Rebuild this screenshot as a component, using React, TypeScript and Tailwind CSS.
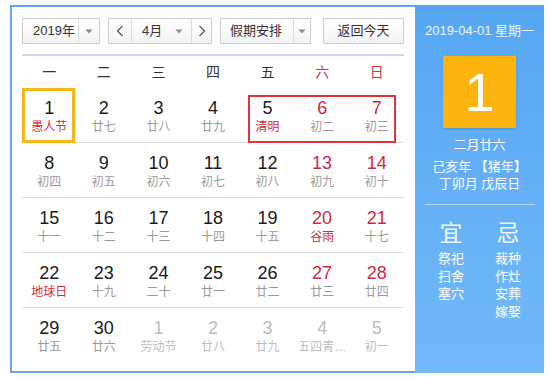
import React from "react";

type Cell = { d: number; l: string; kind?: "fest" | "other" };

const rows: Cell[][] = [
  [
    { d: 1, l: "愚人节", kind: "fest" },
    { d: 2, l: "廿七" },
    { d: 3, l: "廿八" },
    { d: 4, l: "廿九" },
    { d: 5, l: "清明", kind: "fest" },
    { d: 6, l: "初二" },
    { d: 7, l: "初三" },
  ],
  [
    { d: 8, l: "初四" },
    { d: 9, l: "初五" },
    { d: 10, l: "初六" },
    { d: 11, l: "初七" },
    { d: 12, l: "初八" },
    { d: 13, l: "初九" },
    { d: 14, l: "初十" },
  ],
  [
    { d: 15, l: "十一" },
    { d: 16, l: "十二" },
    { d: 17, l: "十三" },
    { d: 18, l: "十四" },
    { d: 19, l: "十五" },
    { d: 20, l: "谷雨", kind: "fest" },
    { d: 21, l: "十七" },
  ],
  [
    { d: 22, l: "地球日", kind: "fest" },
    { d: 23, l: "十九" },
    { d: 24, l: "二十" },
    { d: 25, l: "廿一" },
    { d: 26, l: "廿二" },
    { d: 27, l: "廿三" },
    { d: 28, l: "廿四" },
  ],
  [
    { d: 29, l: "廿五" },
    { d: 30, l: "廿六" },
    { d: 1, l: "劳动节", kind: "other" },
    { d: 2, l: "廿八", kind: "other" },
    { d: 3, l: "廿九", kind: "other" },
    { d: 4, l: "五四青…", kind: "other" },
    { d: 5, l: "初一", kind: "other" },
  ],
];

const weekdays = ["一", "二", "三", "四", "五", "六", "日"];

function Tri() {
  return (
    <svg width="8" height="5" viewBox="0 0 8 5">
      <path d="M0.5 0.5 L7.5 0.5 L4 4.5 Z" fill="#8a8a8a" />
    </svg>
  );
}

function Chev({ right }: { right?: boolean }) {
  return (
    <svg width="8" height="12" viewBox="0 0 8 12">
      <path
        d={right ? "M1.5 1 L6.5 6 L1.5 11" : "M6.5 1 L1.5 6 L6.5 11"}
        fill="none"
        stroke="#555"
        strokeWidth="1.2"
      />
    </svg>
  );
}

export default function App() {
  return (
    <div className="w-[550px] h-[378px] bg-white pt-[5px] pl-[10px] font-['Liberation_Sans','Noto_Sans_CJK_SC',sans-serif]">
      <div className="flex h-[368px] w-[534px]">
        {/* Left calendar */}
        <div className="w-[405px] h-[368px] border-2 border-r-0 border-[#5ea9ef] pl-[10px] pr-[11px] pt-[11px]">
          {/* controls */}
          <div className="flex h-[26px] text-[13px] text-[#333]">
            <div className="flex w-[78px] border border-[#cdcdcd] bg-gradient-to-b from-white to-[#f3f3f3]">
              <div className="flex w-[55px] items-center pl-[10px]">2019年</div>
              <div className="flex flex-1 items-center justify-center border-l border-[#dcdcdc]">
                <Tri />
              </div>
            </div>
            <div className="ml-[8px] flex w-[104px] border border-[#cdcdcd] bg-gradient-to-b from-white to-[#f3f3f3]">
              <div className="flex w-[23px] items-center justify-center border-r border-[#dcdcdc]">
                <Chev />
              </div>
              <div className="flex w-[59px] items-center justify-between pl-[10px] pr-[8px]">
                <span>4月</span>
                <Tri />
              </div>
              <div className="flex flex-1 items-center justify-center border-l border-[#dcdcdc]">
                <Chev right />
              </div>
            </div>
            <div className="ml-[8px] flex w-[91px] border border-[#cdcdcd] bg-gradient-to-b from-white to-[#f3f3f3]">
              <div className="flex w-[72px] items-center pl-[9px]">假期安排</div>
              <div className="flex flex-1 items-center justify-center border-l border-[#dcdcdc]">
                <Tri />
              </div>
            </div>
            <div className="ml-[12px] flex w-[81px] items-center justify-center border border-[#cdcdcd] bg-gradient-to-b from-white to-[#f3f3f3]">
              返回今天
            </div>
          </div>
          {/* divider */}
          <div className="mt-[10px] h-[2px] bg-[#c9d7e6]" />
          {/* weekday header */}
          <div className="grid h-[32px] grid-cols-7 items-center text-[14px]">
            {weekdays.map((w, i) => (
              <div
                key={w}
                className={`text-center ${i >= 5 ? "text-[#d8343f]" : "text-[#333]"}`}
              >
                {w}
              </div>
            ))}
          </div>
          {/* days */}
          {rows.map((row, ri) => (
            <div
              key={ri}
              className={`relative grid h-[55px] grid-cols-7 ${ri < 4 ? "border-b border-[#dedede]" : ""}`}
            >
              {ri === 0 && (
                <div className="pointer-events-none absolute left-[226px] top-[7px] h-[48px] w-[148px] border-2 border-[#e2343d]" />
              )}
              {row.map((c, ci) => {
                const other = c.kind === "other";
                const weekend = ci >= 5;
                const numColor = other
                  ? "text-[#bdbdbd]"
                  : weekend
                  ? "text-[#d4283f]"
                  : "text-[#1a1a1a]";
                const lunColor = other
                  ? "text-[#bdbdbd]"
                  : c.kind === "fest"
                  ? "text-[#cc2f3c]"
                  : "text-[#9a9a9a]";
                return (
                  <div key={ci} className="relative flex flex-col items-center pt-[10px]">
                    {ri === 0 && ci === 0 && (
                      <div className="pointer-events-none absolute left-0 top-0 h-[55px] w-[53px] border-[3px] border-[#f6b818]" />
                    )}
                    <div className={`text-[18px] leading-[20px] ${numColor}`}>{c.d}</div>
                    <div
                      className={`mt-[1px] whitespace-nowrap text-[12px] leading-[16px] ${lunColor}`}
                    >
                      {c.l}
                    </div>
                  </div>
                );
              })}
            </div>
          ))}
        </div>
        {/* Right panel */}
        <div className="flex h-[368px] w-[129px] flex-col items-center bg-gradient-to-b from-[#56a6f2] to-[#72b9fa] text-white">
          <div className="mt-[18px] text-[13px] leading-[16px] text-[#eef6ff]">2019-04-01 星期一</div>
          <div className="mt-[17px] flex h-[72px] w-[73px] items-center justify-center bg-[#fdb40f] text-[54px] leading-none shadow-[0_1px_2px_rgba(0,0,0,0.15)]">
            1
          </div>
          <div className="mt-[8px] text-[13px] leading-[18px]">二月廿六</div>
          <div className="mt-[4px] text-[13px] leading-[17px]">己亥年 【猪年】</div>
          <div className="text-[13px] leading-[17px]">丁卯月 戊辰日</div>
          <div className="mt-[12px] h-[1px] w-[110px] bg-[#b8dafc]" />
          <div className="mt-[14px] flex w-full justify-center gap-[31px]">
            <div className="flex w-[26px] flex-col items-center">
              <div className="text-[23px] leading-[28px] text-[#f4f9ff]">宜</div>
              <div className="mt-[3px] text-[13px] leading-[17.5px]">祭祀</div>
              <div className="text-[13px] leading-[17.5px]">扫舍</div>
              <div className="text-[13px] leading-[17.5px]">塞穴</div>
            </div>
            <div className="flex w-[26px] flex-col items-center">
              <div className="text-[23px] leading-[28px] text-[#f4f9ff]">忌</div>
              <div className="mt-[3px] text-[13px] leading-[17.5px]">裁种</div>
              <div className="text-[13px] leading-[17.5px]">作灶</div>
              <div className="text-[13px] leading-[17.5px]">安葬</div>
              <div className="text-[13px] leading-[17.5px]">嫁娶</div>
            </div>
          </div>
        </div>
      </div>
    </div>
  );
}
